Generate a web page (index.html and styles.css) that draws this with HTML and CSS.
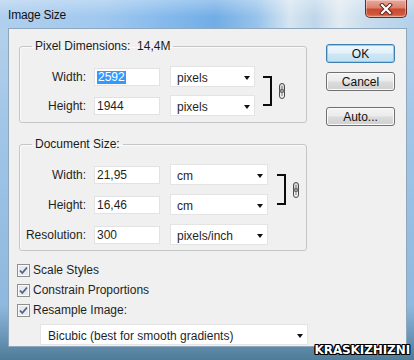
FILE: index.html
```html
<!DOCTYPE html>
<html>
<head>
<meta charset="utf-8">
<link rel="stylesheet" href="styles.css">
</head>
<body>
<div class="window">
  <div class="titlebar">
    <span class="title">Image Size</span>
    <div class="close">
      <svg width="20" height="12" viewBox="0 0 20 12"><path d="M6 2 L14 10 M14 2 L6 10" stroke="#5a2018" stroke-width="4" stroke-linecap="square"/><path d="M6 2 L14 10 M14 2 L6 10" stroke="#ffffff" stroke-width="2.2" stroke-linecap="square"/></svg>
    </div>
  </div>
  <div class="content">
    <div class="main">
      <fieldset class="group g1">
        <legend>Pixel Dimensions:&nbsp;&nbsp;14,4M</legend>
        <div class="grid">
          <span class="lbl">Width:</span>
          <div class="input"><span class="hl">2592</span></div>
          <div class="select"><span>pixels</span><i class="caret"></i></div>
          <div class="link">
            <div class="bracket"></div>
            <svg class="chain" width="8" height="16" viewBox="0 0 8 16"><rect x="1.5" y="0.5" width="5" height="9" rx="2.5" fill="#d8d8d8" stroke="#4a4a4a"/><rect x="1.5" y="6.5" width="5" height="9" rx="2.5" fill="none" stroke="#4a4a4a"/><line x1="4" y1="3" x2="4" y2="13" stroke="#777"/></svg>
          </div>
          <span class="lbl">Height:</span>
          <div class="input">1944</div>
          <div class="select"><span>pixels</span><i class="caret"></i></div>
        </div>
      </fieldset>
      <fieldset class="group g2">
        <legend>Document Size:</legend>
        <div class="grid">
          <span class="lbl">Width:</span>
          <div class="input">21,95</div>
          <div class="select"><span>cm</span><i class="caret"></i></div>
          <div class="link">
            <div class="bracket"></div>
            <svg class="chain" width="8" height="16" viewBox="0 0 8 16"><rect x="1.5" y="0.5" width="5" height="9" rx="2.5" fill="#d8d8d8" stroke="#4a4a4a"/><rect x="1.5" y="6.5" width="5" height="9" rx="2.5" fill="none" stroke="#4a4a4a"/><line x1="4" y1="3" x2="4" y2="13" stroke="#777"/></svg>
          </div>
          <span class="lbl">Height:</span>
          <div class="input">16,46</div>
          <div class="select"><span>cm</span><i class="caret"></i></div>
          <span class="lbl">Resolution:</span>
          <div class="input">300</div>
          <div class="select"><span>pixels/inch</span><i class="caret"></i></div>
        </div>
      </fieldset>
      <div class="checks">
        <div class="check"><svg class="cb" width="13" height="13" viewBox="0 0 13 13"><rect x="0.5" y="0.5" width="12" height="12" fill="#f4f4f4" stroke="#8e8f8f"/><rect x="1.5" y="1.5" width="10" height="10" fill="#e9e9e9" stroke="#fafafa"/><path d="M3 6.5 L5.3 9 L10 3.5" fill="none" stroke="#4b6390" stroke-width="1.8"/></svg><span>Scale Styles</span></div>
        <div class="check"><svg class="cb" width="13" height="13" viewBox="0 0 13 13"><rect x="0.5" y="0.5" width="12" height="12" fill="#f4f4f4" stroke="#8e8f8f"/><rect x="1.5" y="1.5" width="10" height="10" fill="#e9e9e9" stroke="#fafafa"/><path d="M3 6.5 L5.3 9 L10 3.5" fill="none" stroke="#4b6390" stroke-width="1.8"/></svg><span>Constrain Proportions</span></div>
        <div class="check"><svg class="cb" width="13" height="13" viewBox="0 0 13 13"><rect x="0.5" y="0.5" width="12" height="12" fill="#f4f4f4" stroke="#8e8f8f"/><rect x="1.5" y="1.5" width="10" height="10" fill="#e9e9e9" stroke="#fafafa"/><path d="M3 6.5 L5.3 9 L10 3.5" fill="none" stroke="#4b6390" stroke-width="1.8"/></svg><span>Resample Image:</span></div>
      </div>
      <div class="select method"><span>Bicubic (best for smooth gradients)</span><i class="caret"></i></div>
    </div>
    <div class="buttons">
      <div class="btn default">OK</div>
      <div class="btn">Cancel</div>
      <div class="btn auto">Auto...</div>
    </div>
  </div>
  <div class="watermark">KRASKIZHIZNI</div>
</div>
</body>
</html>
```

FILE: styles.css
```css
* { box-sizing: border-box; }
html, body { margin: 0; padding: 0; }
body { font-family: "Liberation Sans", Arial, sans-serif; font-size: 12px; color: #1f1f1f; }

.window {
  position: relative;
  width: 414px;
  height: 360px;
  display: flex;
  flex-direction: column;
  background: linear-gradient(180deg, #b7d3ec 0%, #9fc4e6 40%, #8fb8de 85%, #4f7c98 100%);
  overflow: hidden;
}

.titlebar {
  height: 28px;
  flex: none;
  display: flex;
  align-items: flex-start;
  justify-content: space-between;
  background:
    linear-gradient(180deg, rgba(255,255,255,0.3) 0%, rgba(255,255,255,0) 60%),
    linear-gradient(90deg, #b0cfee 0%, #a0c8ef 25%, #7cb4ea 45%, #72ade6 52%, #97c3ea 62%, #d6e5f1 70%, #bfd6ea 76%, #e2ebf2 82%, #cadded 88%, #b2d0eb 100%);
}
.title {
  margin: 8px 0 0 8px;
  font-size: 12px;
  color: #111;
  letter-spacing: -0.2px;
}
.close {
  width: 42px;
  height: 18px;
  margin-right: 7px;
  border: 1px solid #6b2a22;
  border-top: none;
  border-radius: 0 0 5px 5px;
  background: linear-gradient(180deg, #e9a99a 0%, #dd8270 45%, #c84a33 55%, #d2573c 85%, #e08a6d 100%);
  box-shadow: inset 0 0 0 1px rgba(255,255,255,0.35);
  display: flex;
  align-items: center;
  justify-content: center;
}

.content {
  flex: none;
  height: 319px;
  margin: 0 7px 0 8px;
  background: #f0f0f0;
  border: 1px solid #8ea7bd;
  display: flex;
  padding-left: 8px;
}

.main {
  width: 291px;
  padding-top: 10px;
  display: flex;
  flex-direction: column;
}

.group {
  margin: 0 0 0 2px;
  padding: 0;
  width: 288px;
  border: 1px solid #c3c6c8;
  border-radius: 3px;
  box-shadow: inset 1px 1px 0 #fbfbfb;
}
.group legend {
  margin-left: 12px;
  padding: 0 3px;
  line-height: 14px;
  color: #1a1a1a;
}
.g1 { padding-bottom: 6px; }
.g2 { margin-top: 14px; padding-bottom: 5px; }

.grid {
  display: grid;
  margin-top: 13px;
  grid-auto-rows: 21px;
  align-items: center;
}
.g1 .grid { grid-template-columns: 66px 76px 93px auto; row-gap: 8px; }
.g2 .grid { grid-template-columns: 66px 76px 106px auto; row-gap: 9px; }

.lbl { text-align: right; }
.input {
  margin-left: 8px;
  width: 66px;
  height: 18px;
  background: #fff;
  border: 1px solid #e2e2e2;
  padding-left: 2px;
  line-height: 16px;
}
.hl { background: #3399ff; color: #fff; padding: 0 1px; display: inline-block; line-height: 13px; }

.select {
  margin-left: 8px;
  height: 21px;
  background: #fff;
  border: 1px solid #e4e4e4;
  display: flex;
  align-items: center;
  justify-content: space-between;
  padding: 2px 4px 0 6px;
}
.g1 .select { width: 85px; }
.g2 .select { width: 98px; }
.caret {
  width: 0; height: 0;
  border-left: 3.5px solid transparent;
  border-right: 3.5px solid transparent;
  border-top: 4px solid #111;
}

.link {
  grid-column: 4;
  grid-row: 1 / span 2;
  align-self: stretch;
  display: flex;
  align-items: center;
  padding: 10px 0 10px 8px;
}
.g2 .link { padding-left: 9px; }
.bracket {
  width: 9px;
  height: 100%;
  border: 2px solid #0c0c0c;
  border-left: none;
}
.chain { margin-left: 6px; }

.checks { margin-top: 9px; }
.check {
  height: 20px;
  display: flex;
  align-items: center;
  gap: 3px;
}

.method {
  margin: 4px 0 0 23px;
  width: 268px;
  padding-left: 7px;
}

.buttons {
  margin-left: 18px;
  padding-top: 15px;
  display: flex;
  flex-direction: column;
  gap: 9px;
}
.btn {
  width: 69px;
  height: 19px;
  border: 1px solid #707070;
  border-radius: 3px;
  background: linear-gradient(180deg, #f4f4f4 0%, #ebebeb 48%, #dcdcdc 52%, #d0d0d0 100%);
  box-shadow: inset 0 0 0 1px #fbfbfb;
  display: flex;
  align-items: center;
  justify-content: center;
  color: #111;
}
.btn.default {
  border-color: #3c7fb1;
  background: linear-gradient(180deg, #eef7fc 0%, #e2f1fa 48%, #cfe7f5 52%, #c2e1f3 100%);
  box-shadow: inset 0 0 0 1px #8fd0f0;
}
.btn.auto { margin-top: 7px; }

.watermark {
  position: absolute;
  right: 4px;
  bottom: 3px;
  font-family: "DejaVu Sans", sans-serif;
  font-weight: bold;
  font-size: 12px;
  color: #fff;
  letter-spacing: -0.1px;
  text-shadow: 1px 0 0 #000, -1px 0 0 #000, 0 1px 0 #000, 0 -1px 0 #000, 1px 1px 0 #000, -1px -1px 0 #000, 1px -1px 0 #000, -1px 1px 0 #000;
}
```
